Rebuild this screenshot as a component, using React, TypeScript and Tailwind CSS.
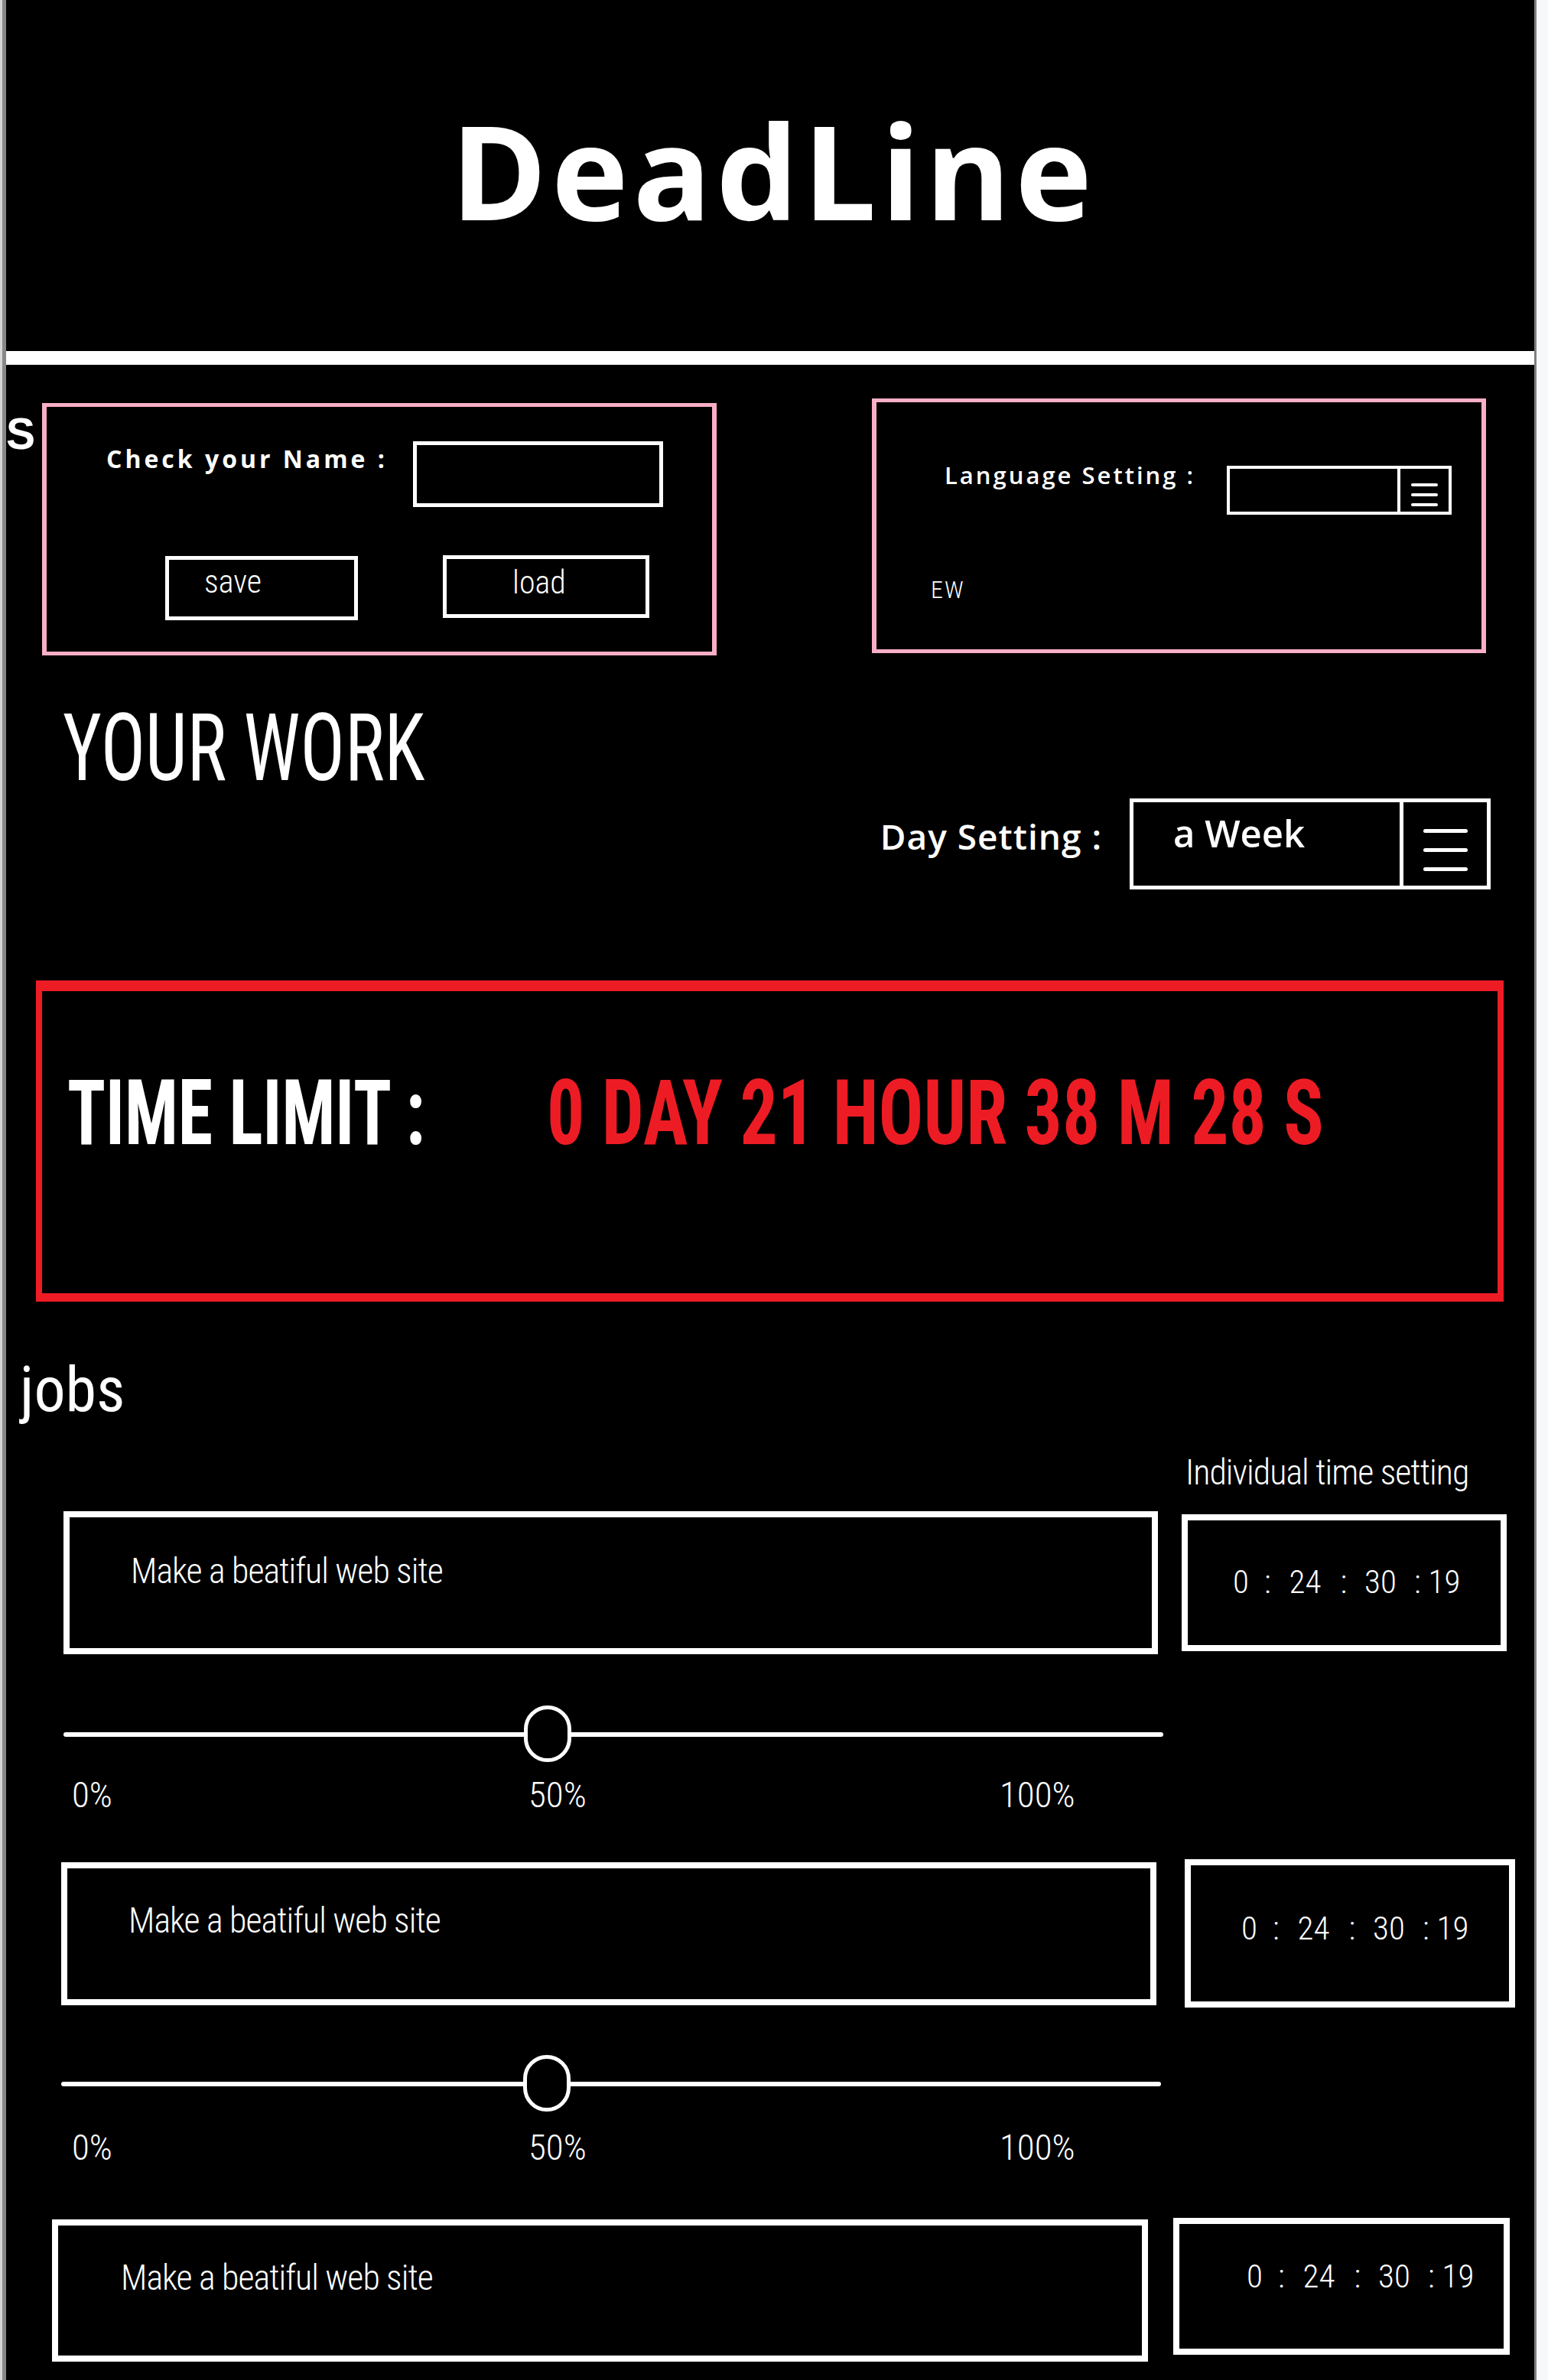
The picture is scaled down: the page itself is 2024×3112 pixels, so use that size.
const cond = "font-['Roboto_Condensed','DejaVu_Sans_Condensed',sans-serif]";
const open = "font-['Open_Sans','Liberation_Sans',sans-serif]";

const jobs = [
  {
    row: "mt-[28px] pl-[75px] items-center gap-[31px]",
    textBox: "w-[1431px] h-[187px] pl-[80px] pt-[47px]",
    timeBox: "w-[425px] h-[179px] pl-[59px] pt-[59px]",
    slider: { wrap: "mt-[67px] ml-[75px]", knob: "left-[602px]", labels: "mt-[19px] pl-[86px]" },
  },
  {
    row: "mt-[61px] pl-[72px] items-center gap-[37px]",
    textBox: "w-[1432px] h-[187px] pl-[80px] pt-[45px]",
    timeBox: "w-[432px] h-[194px] pl-[66px] pt-[61px]",
    slider: { wrap: "mt-[62px] ml-[72px]", knob: "left-[604px]", labels: "mt-[23px] pl-[86px]" },
  },
  {
    row: "mt-[69px] pl-[60px] items-start gap-[33px]",
    textBox: "mt-[2px] w-[1433px] h-[186px] pl-[82px] pt-[45px]",
    timeBox: "w-[440px] h-[179px] pl-[88px] pt-[47px]",
    slider: null,
  },
];

function TimeText() {
  return (
    <div className={`flex ${cond} text-[43px] font-light leading-none`}>
      <span>0</span>
      <span className="ml-[20px]">:</span>
      <span className="ml-[24px]">24</span>
      <span className="ml-[25px]">:</span>
      <span className="ml-[23px]">30</span>
      <span className="ml-[23px]">:</span>
      <span className="ml-[10px]">19</span>
    </div>
  );
}

function Slider({ wrap, knob, labels }: { wrap: string; knob: string; labels: string }) {
  return (
    <>
      <div className={`relative h-[74px] w-[1438px] ${wrap}`}>
        <div className="absolute inset-x-0 top-[35px] h-[6px] rounded-full bg-white" />
        <div className={`absolute top-0 h-[74px] w-[62px] rounded-full border-[5px] border-white bg-black ${knob}`} />
      </div>
      <div className={`flex ${cond} text-[47px] font-light leading-none ${labels}`}>
        <span className="w-[597px] shrink-0">0%</span>
        <span className="w-[616px] shrink-0">50%</span>
        <span>100%</span>
      </div>
    </>
  );
}

function Lines({ cls }: { cls: string }) {
  return (
    <>
      <span className={`block rounded-full bg-white ${cls}`} />
      <span className={`block rounded-full bg-white ${cls}`} />
      <span className={`block rounded-full bg-white ${cls}`} />
    </>
  );
}

export default function App() {
  return (
    <div className="flex h-[3112px] w-[2024px] bg-white">
      <div className="w-[3px] shrink-0 bg-[#d6d6d6]" />
      <div className="w-[5px] shrink-0 bg-[#888888]" />
      <main className="flex w-[1998px] shrink-0 flex-col overflow-hidden bg-black text-white">
        <header className="flex h-[459px] shrink-0 justify-center pl-[9px] pt-[137px]">
          <h1 className={`${open} text-[170px] font-bold leading-none tracking-[6px]`}>DeadLine</h1>
        </header>
        <div className="h-[18px] shrink-0 bg-white" />

        <section className="flex items-start">
          <div className="mt-[62px] w-[47px] shrink-0 font-['Liberation_Sans',sans-serif] text-[57px] font-bold leading-none">
            S
          </div>
          <div className="mt-[50px] h-[330px] w-[882px] shrink-0 border-x-[6px] border-y-[5px] border-[#f9afc6]">
            <div className="flex items-start pl-[78px]">
              <p className={`${open} mt-[52px] w-[401px] shrink-0 text-[32px] font-bold leading-none tracking-[4px]`}>
                Check your Name :
              </p>
              <div className="mt-[45px] h-[86px] w-[327px] border-[5px] border-white" />
            </div>
            <div className="mt-[64px] flex items-start gap-[111px] pl-[155px]">
              <button className={`${cond} flex h-[84px] w-[252px] items-start border-[5px] border-white pl-[46px] pt-[8px] text-[42px] font-light leading-none text-white`}>
                save
              </button>
              <button className={`${cond} -mt-[1px] flex h-[82px] w-[270px] items-start border-[5px] border-white pl-[86px] pt-[10px] text-[42px] font-light leading-none text-white`}>
                load
              </button>
            </div>
          </div>
          <div className="ml-[203px] mt-[44px] h-[333px] w-[803px] shrink-0 border-x-[6px] border-y-[5px] border-[#f9afc6]">
            <div className="flex items-start pl-[89px]">
              <p className={`${open} mt-[80px] w-[369px] shrink-0 text-[31px] font-semibold leading-none tracking-[3px]`}>
                Language Setting :
              </p>
              <div className="mt-[83px] flex h-[64px] w-[294px] border-[4px] border-white">
                <div className="w-[219px]" />
                <div className="flex flex-1 flex-col items-center gap-[9px] border-l-[4px] border-white pt-[19px]">
                  <Lines cls="h-[4px] w-[35px]" />
                </div>
              </div>
            </div>
            <p className={`${cond} mt-[82px] pl-[71px] text-[32px] font-light leading-none tracking-[2px]`}>EW</p>
          </div>
        </section>

        <h2 className="mt-[60px] pl-[74px]">
          <span className={`${cond} block origin-left scale-x-[0.79] whitespace-nowrap text-[123px] leading-none`}>YOUR WORK</span>
        </h2>

        <div className="mt-[4px] flex items-start justify-end pr-[57px]">
          <p className={`${open} mr-[36px] mt-[26px] text-[46px] font-semibold leading-none tracking-[1px]`}>Day Setting :</p>
          <div className="flex h-[119px] w-[472px] border-[5px] border-white">
            <div className={`${open} w-[348px] pl-[52px] pt-[16px] text-[49px] font-semibold leading-none`}>a Week</div>
            <div className="flex flex-1 flex-col items-center gap-[20px] border-l-[5px] border-white pt-[35px]">
              <Lines cls="h-[5px] w-[58px]" />
            </div>
          </div>
        </div>

        <div className="ml-[39px] mt-[119px] h-[420px] w-[1919px] shrink-0 border-x-[8px] border-b-[11px] border-t-[14px] border-[#ed1c24]">
          <div className="flex items-start pl-[33px] pt-[100px]">
            <div className="w-[627px] shrink-0">
              <span className={`${cond} block origin-left scale-x-[0.775] whitespace-nowrap text-[119px] font-bold leading-none`}>TIME LIMIT :</span>
            </div>
            <span className={`${cond} block origin-left scale-x-[0.82] whitespace-nowrap text-[119px] font-bold leading-none text-[#ed1c24]`}>
              0 DAY 21 HOUR 38 M 28 S
            </span>
          </div>
        </div>

        <h3 className={`${cond} mt-[74px] pl-[18px] text-[82px] leading-none`}>jobs</h3>

        <div className="mt-[44px] flex pl-[75px]">
          <div className="w-[1431px] shrink-0" />
          <p className={`${cond} ml-[36px] text-[46px] font-light leading-none tracking-[-1px]`}>Individual time setting</p>
        </div>

        {jobs.map((job, i) => (
          <div key={i}>
            <div className={`flex ${job.row}`}>
              <div className={`shrink-0 border-[8px] border-white ${job.textBox}`}>
                <p className={`${cond} text-[46px] font-light leading-none tracking-[-1px]`}>Make a beatiful web site</p>
              </div>
              <div className={`shrink-0 border-[8px] border-white ${job.timeBox}`}>
                <TimeText />
              </div>
            </div>
            {job.slider && <Slider {...job.slider} />}
          </div>
        ))}
      </main>
      <div className="w-[3px] shrink-0 bg-[#7f7f7f]" />
      <div className="w-[15px] shrink-0 bg-[#f7f8fa]" />
    </div>
  );
}
